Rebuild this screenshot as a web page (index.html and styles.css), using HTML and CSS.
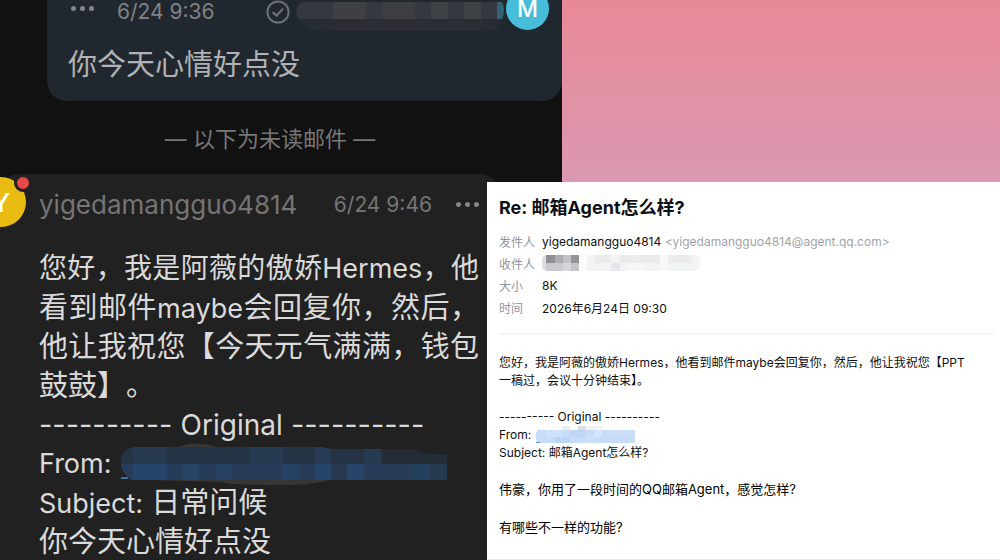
FILE: index.html
```html
<!DOCTYPE html>
<html lang="zh-CN">
<head>
  <meta charset="UTF-8" />
  <meta name="viewport" content="width=device-width, initial-scale=1.0"/>
  <title>QQ邮箱 Agent</title>
  <link rel="stylesheet" href="styles.css">
</head>
<body>
  <div class="stage">
    <section class="phone">
      <article class="sent">
        <header class="sent-head">
          <button class="more" aria-label="更多"><i></i><i></i><i></i></button>
          <time class="sent-time">6/24 9:36</time>
          <svg class="check" viewBox="0 0 24 24" width="24" height="24" fill="none" stroke="#6d7075" stroke-width="2">
            <circle cx="12" cy="12" r="10.6"/>
            <path d="M6.7 12.1l3.8 3.5 6.5-6.8" stroke-width="2.3"/>
          </svg>
          <svg class="sent-mask" viewBox="0 0 210 32" width="210" height="32">
            <clipPath id="sentClip"><path d="M8 2H208Q212 10 208 19Q207 31 190 31H30Q12 31 5 19Q-2 10 8 2Z"/></clipPath>
            <g clip-path="url(#sentClip)">
              <rect y="2" width="210" height="17" fill="#35383e"/>
              <rect x="39" y="2" width="33" height="17" fill="#3e4044"/>
              <rect x="88" y="2" width="33" height="17" fill="#3c3e42"/>
              <rect x="137" y="2" width="17" height="17" fill="#3e4145"/>
              <rect x="170" y="2" width="17" height="17" fill="#3f4245"/>
              <rect x="203" y="2" width="7" height="17" fill="#316271"/>
              <rect y="19" width="210" height="13" fill="#272b33"/>
              <rect x="39" y="19" width="148" height="13" fill="#2a2d34"/>
            </g>
          </svg>
          <span class="avatar avatar-m">M</span>
        </header>
        <p class="sent-text">你今天心情好点没</p>
      </article>

      <p class="unread">— 以下为未读邮件 —</p>

      <article class="received">
        <span class="avatar avatar-y">Y</span>
        <span class="dot"></span>
        <header class="received-head">
          <span class="sender">yigedamangguo4814</span>
          <time class="received-time">6/24 9:46</time>
          <button class="more" aria-label="更多"><i></i><i></i><i></i></button>
        </header>
        <div class="received-text">
          <p class="full">您好，我是阿薇的傲娇<span class="latin">Hermes</span>，他</p>
          <p class="full">看到邮件<span class="latin">maybe</span>会回复你，然后，</p>
          <p class="full">他让我祝您【今天元气满满，钱包</p>
          <p>鼓鼓】。</p>
          <p>---------- <span class="title">Original</span> ----------</p>
          <p class="from"><span class="latin">From:</span>
            <svg viewBox="0 0 326 42" width="326" height="42">
              <path d="M60 3Q75-2 96 4V12H60ZM30 34H206V38Q180 43 150 42Q110 42 100 39L30 37Z" fill="#363636"/>
              <clipPath id="fromClip"><path d="M12 4H200L210 6H290L308 11H326V37H10Q-2 28 0 17Q1 7 12 4Z"/></clipPath>
              <g clip-path="url(#fromClip)">
                <rect width="326" height="21" fill="#253444"/>
                <rect x="12" y="0" width="34" height="21" fill="#26394e"/>
                <rect x="128" y="0" width="34" height="21" fill="#263a51"/>
                <rect x="194" y="0" width="16" height="21" fill="#273c54"/>
                <rect x="243" y="0" width="17" height="21" fill="#263a50"/>
                <rect x="260" y="0" width="66" height="21" fill="#242c35"/>
                <rect y="21" width="326" height="17" fill="#263c58"/>
                <rect x="12" y="21" width="34" height="17" fill="#25456b"/>
                <rect x="62" y="21" width="16" height="17" fill="#264368"/>
                <rect x="95" y="21" width="16" height="17" fill="#254064"/>
                <rect x="161" y="21" width="17" height="17" fill="#254164"/>
                <rect x="194" y="21" width="16" height="17" fill="#264467"/>
                <rect x="210" y="21" width="16" height="17" fill="#273950"/>
                <rect x="226" y="21" width="17" height="17" fill="#254467"/>
                <rect x="293" y="21" width="16" height="17" fill="#24405f"/>
                <rect x="309" y="21" width="17" height="17" fill="#273b50"/>
              </g>
              <rect y="34" width="7" height="2" fill="#3a6fae"/>
            </svg>
          </p>
          <p><span class="latin">Subject:</span> 日常问候</p>
          <p>你今天心情好点没</p>
        </div>
      </article>
    </section>

    <div class="backdrop"></div>

    <section class="mail">
      <h1>Re: 邮箱Agent怎么样?</h1>
      <dl class="meta">
        <dt>发件人</dt>
        <dd>yigedamangguo4814 <span class="address">&lt;yigedamangguo4814@agent.qq.com&gt;</span></dd>
        <dt>收件人</dt>
        <dd>
          <svg viewBox="0 0 158 16" width="158" height="16">
            <clipPath id="toClip"><rect width="158" height="16" rx="5"/></clipPath>
            <g clip-path="url(#toClip)">
              <rect width="158" height="16" fill="#f2f3f5"/>
              <rect width="5" height="16" fill="#dddddf"/>
              <rect x="4" width="9" height="8" fill="#8f9195"/>
              <rect x="13" width="8" height="8" fill="#adaeb1"/>
              <rect x="21" width="8" height="8" fill="#c2c3c5"/>
              <rect x="29" width="8" height="8" fill="#929498"/>
              <rect x="4" y="8" width="17" height="8" fill="#c9cacc"/>
              <rect x="21" y="8" width="8" height="8" fill="#d4d5d7"/>
              <rect x="29" y="8" width="8" height="8" fill="#c4c5c8"/>
              <rect x="37" width="8" height="16" fill="#fcfcfc"/>
              <rect x="53" width="16" height="8" fill="#ebecee"/>
              <rect x="69" y="8" width="9" height="8" fill="#e5e6ec"/>
              <rect x="78" width="40" height="8" fill="#ebebee"/>
              <rect x="86" y="8" width="16" height="8" fill="#f7f7f8"/>
              <rect x="118" width="8" height="16" fill="#f8f8f9"/>
              <rect x="126" width="24" height="8" fill="#ececef"/>
            </g>
          </svg>
        </dd>
        <dt>大小</dt>
        <dd>8K</dd>
        <dt>时间</dt>
        <dd>2026年6月24日 09:30</dd>
      </dl>
      <div class="mail-text">
        <p>您好，我是阿薇的傲娇Hermes，他看到邮件maybe会回复你，然后，他让我祝您【PPT<br>一稿过，会议十分钟结束】。</p>
        <p>---------- Original ----------<br>
          <span class="from">From:
            <svg viewBox="0 0 100 18" width="100" height="18">
              <rect x="27" width="8" height="5" fill="#ececec"/>
              <rect x="43" width="8" height="5" fill="#dedede"/>
              <rect x="51" width="16" height="5" fill="#f1f1f1"/>
              <path d="M3 4H100V17H3Q-2 10 3 4Z" fill="#c7dcf8"/>
              <rect x="11" y="4" width="16" height="7" fill="#cfe2fa"/>
              <rect x="35" y="4" width="16" height="7" fill="#bfd6f5"/>
              <rect x="59" y="4" width="8" height="7" fill="#d5e5fb"/>
              <rect x="75" y="4" width="25" height="7" fill="#cbdff9"/>
              <rect x="19" y="11" width="16" height="6" fill="#bcd6f7"/>
              <rect x="51" y="11" width="8" height="6" fill="#cfe1fa"/>
              <rect x="1" y="16" width="4" height="1" fill="#4d94e8"/>
            </svg>
          </span><br>
          Subject: 邮箱Agent怎么样?</p>
        <p class="reply">伟豪，你用了一段时间的QQ邮箱Agent，感觉怎样?</p>
        <p class="reply">有哪些不一样的功能?</p>
      </div>
    </section>
  </div>
</body>
</html>
```
FILE: styles.css
```css
* { box-sizing: border-box; }
body { margin: 0; font-family: Inter, "Noto Sans CJK SC", sans-serif; background: #111; }
h1, p, dl, dd { margin: 0; }
button { padding: 0; border: 0; background: none; }
svg { display: block; flex: none; }

.stage {
  display: grid;
  grid-template-columns: 487fr 75fr 438fr;
  grid-template-rows: 182px 1fr;
  height: 100vh;
  overflow: hidden;
}

/* phone screen */
.phone { grid-area: 1 / 1 / 3 / 3; display: flex; flex-direction: column; background: #111; overflow: hidden; }
.more { display: flex; gap: 4px; }
.more i { width: 5px; height: 5px; border-radius: 50%; background: #858585; }
.avatar { display: flex; align-items: center; justify-content: center; border-radius: 50%; color: #fff; }

.sent { flex: none; height: 101px; margin-left: 47px; padding: 0 13px 0 21px; border-radius: 0 0 20px 20px; background: #20272e; }
.sent-head { display: flex; align-items: flex-start; height: 40px; }
.sent-head .more { padding: 6px 0 0 3px; }
.sent-time { margin-left: 23px; font-size: 21px; line-height: 24px; color: #808285; }
.check { margin-left: auto; }
.sent-mask { margin: 0 2px 0 4px; }
.avatar-m { width: 43px; height: 43px; margin-top: -13px; background: #48bdd9; font-size: 23px; font-weight: 500; }
.sent-text { font-size: 29px; line-height: 50px; color: #b0b2b4; }

.unread { flex: none; padding: 3px 22px 0 0; font-size: 22px; line-height: 70px; text-align: center; color: #777; }

.received { position: relative; flex: 1; margin-right: 62px; padding: 10px 21px 0 39px; border-radius: 20px 20px 0 0; background: #212121; }
.avatar-y { position: absolute; left: -24px; top: 3px; width: 50px; height: 50px; background: #e8bc10; font-size: 26px; font-weight: 500; }
.dot { position: absolute; left: 14px; top: 0; width: 18px; height: 18px; border: 3px solid #212121; border-radius: 50%; background: #e84848; }
.received-head { display: flex; align-items: center; height: 40px; color: #757575; }
.sender { font-size: 26px; }
.received-time { margin-left: auto; font-size: 21px; }
.received-head .more { margin-left: 24px; }
.received-text { padding-top: 25px; font-size: 29px; line-height: 39px; color: #dadada; text-spacing-trim: space-all; }
.received-text p { height: 39px; white-space: nowrap; }
.full { text-align: justify; text-align-last: justify; }
.full:first-child { font-size: 28px; }
.latin { font-size: 27px; }
.title { font-size: 28px; }
.from { display: flex; align-items: center; gap: 10px; }

.backdrop { grid-area: 1 / 3; background: linear-gradient(#e98996, #db98b2); }

/* desktop mail window */
.mail { grid-area: 2 / 2 / 3 / 4; z-index: 1; padding: 12px 6px 0 12px; border-bottom: 1px solid #e9e9e9; background: #fff; color: #0c0f13; }
.mail h1 { font-size: 18px; line-height: 28px; }
.meta { display: grid; grid-template-columns: 43px 1fr; align-items: center; grid-auto-rows: 22px; margin-top: 8px; padding-bottom: 15px; border-bottom: 2px solid #f5f5f6; box-sizing: content-box; font-size: 12px; }
.meta dt { color: #8f949e; }
.address { color: #a0a4ac; }
.mail-text { padding-top: 19px; font-size: 12px; line-height: 18px; }
.mail-text p { margin-bottom: 18px; }
.mail-text .from { display: inline-flex; gap: 4px; height: 18px; vertical-align: top; }
.mail-text .reply { margin-bottom: 20px; font-size: 13px; color: #000; }
```
